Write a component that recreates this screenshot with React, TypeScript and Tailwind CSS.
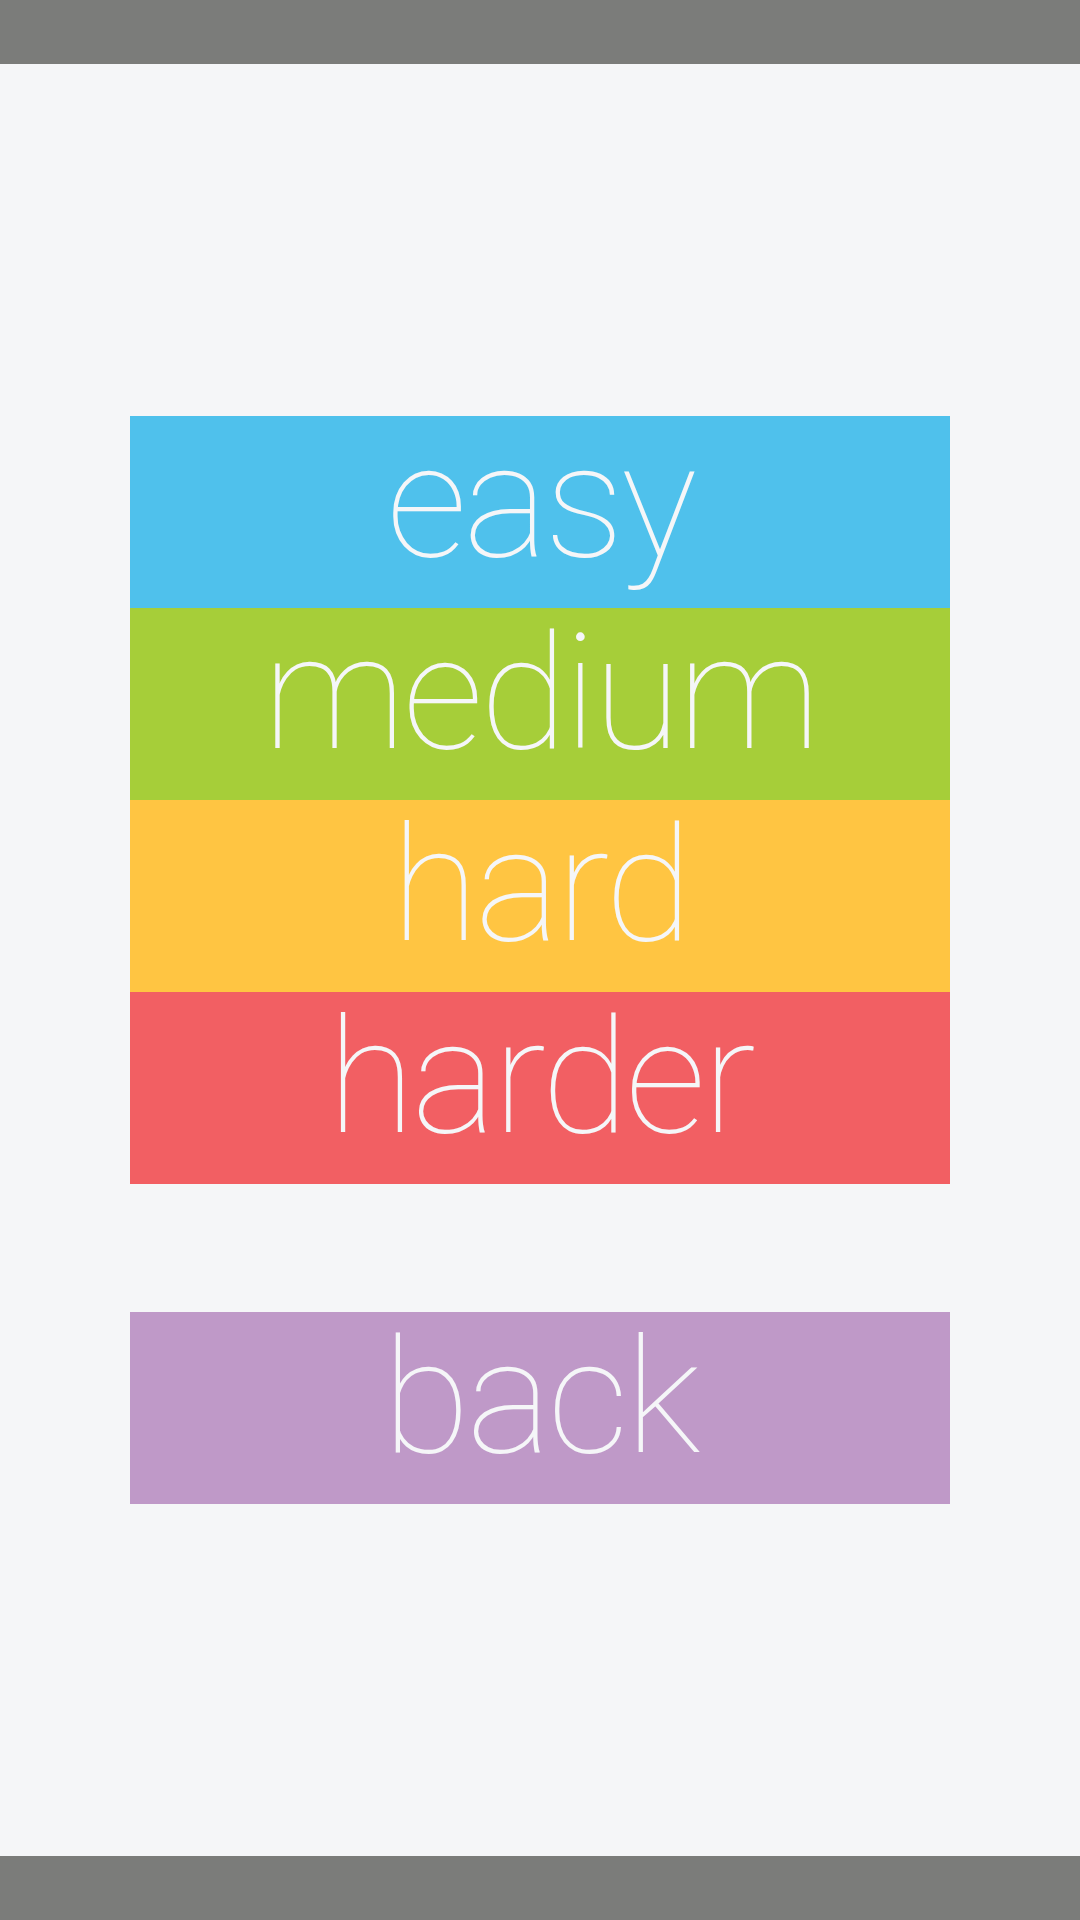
import React from "react";

const items = [
  { label: "easy", bg: "bg-[#4FC1EC]" },
  { label: "medium", bg: "bg-[#A6CE39]" },
  { label: "hard", bg: "bg-[#FFC542]" },
  { label: "harder", bg: "bg-[#F25F63]" },
];

export default function App() {
  return (
    <div className="flex h-[1920px] w-[1080px] flex-col bg-[#F5F6F8]" style={{ fontFamily: "Roboto, 'Noto Sans', sans-serif" }}>
      <div className="h-16 bg-[#7B7C7A]" />
      <div className="flex flex-1 flex-col px-[130px] pt-[352px]">
        {items.map((it) => (
          <div
            key={it.label}
            className={`h-[192px] ${it.bg} pt-[6px] text-center text-[160px] leading-none font-thin tracking-[-3.5px] text-[#F5F6F8]`}
          >
            {it.label}
          </div>
        ))}
        <div className="mt-[128px] h-[192px] bg-[#BF99C8] pt-[6px] text-center text-[160px] leading-none font-thin tracking-[-3.5px] text-[#F5F6F8]">
          back
        </div>
      </div>
      <div className="h-16 bg-[#7B7C7A]" />
    </div>
  );
}
